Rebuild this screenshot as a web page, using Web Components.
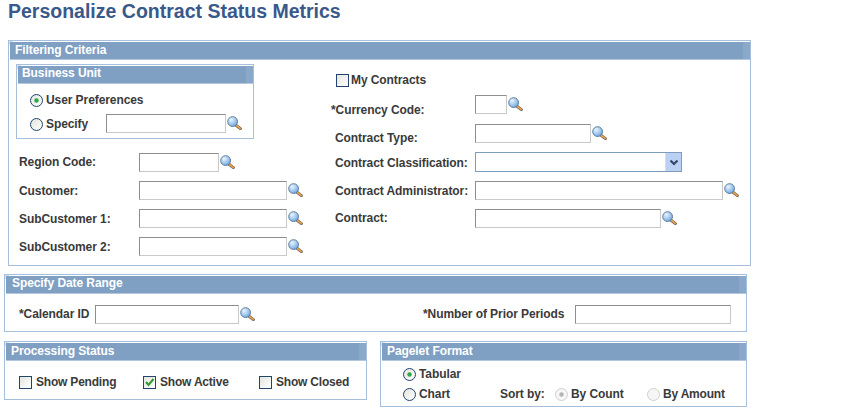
<!DOCTYPE html>
<html>
<head>
<meta charset="utf-8">
<title>Personalize Contract Status Metrics</title>
<style>
html, body { margin: 0; background: #fff; }
body { width: 844px; height: 412px; overflow: hidden; font: bold 12px "Liberation Sans", Arial, sans-serif; color: #3a3a3a; letter-spacing: -0.08px; }
.page { display: flex; flex-direction: column; padding: 0 0 0 4px; }
.filter-body { display: flex; padding: 4px 0 0 7px; height: 205px; box-sizing: border-box; }
.left { width: 315px; display: flex; flex-direction: column; }
.right { display: flex; flex-direction: column; }
.bu-rows { display: flex; flex-direction: column; padding: 4px 0 0 13px; height: 55px; box-sizing: border-box; }
.date-body { display: flex; align-items: center; justify-content: space-between; height: 40px; padding: 0 14px 0 14px; }
.date-body > div { display: flex; align-items: center; }
.bottom { display: flex; gap: 13px; margin-top: 9px; }
.status-body { display: flex; padding: 12px 0 0 14px; height: 39px; box-sizing: border-box; letter-spacing: -0.2px; }
.format-body { display: flex; flex-direction: column; padding: 3px 0 0 22px; height: 46px; box-sizing: border-box; }
.format-row { display: flex; align-items: center; height: 20px; }
</style>
</head>
<body>
<template id="lookup-icon">
  <svg width="15" height="14" viewBox="0 0 15 14" style="display:block">
    <defs>
      <radialGradient id="lens" cx="0.35" cy="0.3" r="0.8">
        <stop offset="0" stop-color="#eaf4fd"/><stop offset="0.6" stop-color="#9cc4ec"/><stop offset="1" stop-color="#5f97d6"/>
      </radialGradient>
    </defs>
    <path d="M9 9.2 L13.4 12.6" stroke="#7b6a58" stroke-width="3" stroke-linecap="round"/>
    <path d="M9.6 9.6 L13.2 12.4" stroke="#eda24e" stroke-width="1.5" stroke-linecap="round"/>
    <circle cx="5.6" cy="5.6" r="4.9" fill="url(#lens)" stroke="#5d7f9f" stroke-width="1"/>
  </svg>
</template>

<script>
class PsPanel extends HTMLElement {
    constructor(){
        super();
        this.attachShadow({mode:'open'});
        this.shadowRoot.innerHTML = `
            <style>
                :host{ display: block; box-sizing: border-box; border: 1px solid #a6bfdc; background: #fff; }
                .head{
                    position: relative;
                    height: 18px; box-sizing: border-box;
                    padding-left: var(--head-pad, 5px);
                    margin: 1px 0 0 1px;
                    background: #7f9fc3;
                    border-bottom: 1px solid #b3c7de;
                    color: #fff; font: bold 12px/var(--head-lh, 14px) "Liberation Sans", Arial, sans-serif;
                }
                .head::before{ content: ""; position: absolute; left: -1px; top: -1px; width: 3px; height: 3px; border-left: 1px solid #d7e1ed; border-top: 1px solid #d7e1ed; }
                .head::after{ content: ""; position: absolute; right: 0; top: 0; width: 7px; height: 100%; background: #8aa8ca; }
            </style>
            <div class="head"><slot name="title"></slot></div>
            <slot></slot>
        `;
    }
}
customElements.define('ps-panel', PsPanel);

class PsLookup extends HTMLElement {
    constructor(){
        super();
        this.attachShadow({mode:'open'});
    }
    connectedCallback(){
        let w = this.getAttribute('width') || 148;
        let icon = this.hasAttribute('noicon') ? '' : document.getElementById('lookup-icon').innerHTML;
        this.shadowRoot.innerHTML = `
            <style>
                :host{ display: inline-flex; align-items: flex-start; }
                .box{
                    box-sizing: border-box; width: ${w}px; height: 19px;
                    border: 1px solid #c9c9c9; border-top-color: #8e8e8e; border-left-color: #8e8e8e;
                    background: #fff;
                }
                .ico{ margin: 2px 0 0 1px; }
            </style>
            <div class="box"></div>
            <div class="ico">${icon}</div>
        `;
    }
}
customElements.define('ps-lookup', PsLookup);

class PsSelect extends HTMLElement {
    constructor(){
        super();
        this.attachShadow({mode:'open'});
        this.shadowRoot.innerHTML = `
            <style>
                :host{ display: block; box-sizing: border-box; width: 207px; height: 20px; border: 1px solid #7e9cbd; background: #fff; position: relative; }
                .btn{ position: absolute; right: 0; top: 0; bottom: 0; width: 16px; background: #bcd0f3; border-left: 1px solid #d2def5; box-sizing: border-box; display: flex; align-items: center; justify-content: center; }
            </style>
            <div class="btn"><svg width="10" height="7" viewBox="0 0 10 7"><path d="M1.5 1.5 L5 5 L8.5 1.5" fill="none" stroke="#34496b" stroke-width="2.2"/></svg></div>
        `;
    }
}
customElements.define('ps-select', PsSelect);

class PsCheck extends HTMLElement {
    constructor(){
        super();
        this.attachShadow({mode:'open'});
    }
    connectedCallback(){
        let mark = this.hasAttribute('checked') ? '<svg width="11" height="11" viewBox="0 0 11 11" style="display:block"><path d="M2 5 L4.5 8 L9.5 2" fill="none" stroke="#2f9a2f" stroke-width="2"/></svg>' : '';
        let gap = this.getAttribute('gap') || 4;
        this.shadowRoot.innerHTML = `
            <style>
                :host{ display: inline-flex; align-items: center; }
                .box{ box-sizing: border-box; width: 13px; height: 13px; border: 1px solid #23446f; background: linear-gradient(135deg, #e4e4e0, #fff); margin-right: ${gap}px; }
            </style>
            <div class="box">${mark}</div><slot></slot>
        `;
    }
}
customElements.define('ps-check', PsCheck);

class PsRadio extends HTMLElement {
    constructor(){
        super();
        this.attachShadow({mode:'open'});
    }
    connectedCallback(){
        let off = this.hasAttribute('disabled');
        let on = this.hasAttribute('checked');
        let dot = on ? `<circle cx="6.5" cy="6.5" r="2.2" fill="${off ? '#b4b4b4' : '#2ea84a'}"/>` : '';
        this.shadowRoot.innerHTML = `
            <style>
                :host{ display: inline-flex; align-items: center; }
                svg{ display: block; margin-right: 3px; }
            </style>
            <svg width="13" height="13" viewBox="0 0 13 13">
                <defs><linearGradient id="r" x1="0" y1="0" x2="1" y2="1"><stop offset="0" stop-color="#e2e2dc"/><stop offset="1" stop-color="#fff"/></linearGradient></defs>
                <circle cx="6.5" cy="6.5" r="6" fill="${off ? '#f6f6f6' : 'url(#r)'}" stroke="${off ? '#cfcfcf' : '#23446f'}"/>
                ${dot}
            </svg><slot></slot>
        `;
    }
}
customElements.define('ps-radio', PsRadio);

// label + control on a fixed row height, drop = how far the label sits below the input's centre
class PsField extends HTMLElement {
    constructor(){
        super();
        this.attachShadow({mode:'open'});
    }
    connectedCallback(){
        let lw = this.getAttribute('label-width') || 120;
        let h = this.getAttribute('height') || 28;
        let drop = this.getAttribute('drop') || 0;
        this.shadowRoot.innerHTML = `
            <style>
                :host{ display: block; }
                .row{ display: flex; height: ${h}px; box-sizing: border-box; }
                .lab{ width: ${lw}px; height: 19px; line-height: 19px; white-space: nowrap; padding-top: ${drop}px; box-sizing: content-box; }
                :host([req]) .lab{ margin-left: -4px; padding-right: 4px; }
            </style>
            <div class="row"><div class="lab"><slot name="label"></slot></div><slot></slot></div>
        `;
    }
}
customElements.define('ps-field', PsField);
</script>

<div style="height:40px;box-sizing:border-box;padding:0 0 0 8px;color:#39598a;letter-spacing:0;font:bold 19.5px/22px 'Liberation Sans',Arial,sans-serif">Personalize Contract Status Metrics</div>

<div class="page">
  <ps-panel style="width:743px;height:226px;margin-left:4px;--head-lh:16px">
    <span slot="title">Filtering Criteria</span>
    <div class="filter-body">
      <div class="left">
        <ps-panel style="width:238px;height:75px;flex:none;--head-lh:14px;--head-pad:4px">
          <span slot="title">Business Unit</span>
          <div class="bu-rows">
            <ps-radio checked style="height:24px">User Preferences</ps-radio>
            <div style="display:flex;height:24px">
              <ps-radio style="width:76px;height:24px">Specify</ps-radio>
              <ps-lookup width="120" style="margin-top:2px"></ps-lookup>
            </div>
          </div>
        </ps-panel>
        <div style="height:14px;flex:none"></div>
        <div style="padding-left:3px">
          <ps-field height="28"><span slot="label">Region Code:</span><ps-lookup width="80"></ps-lookup></ps-field>
          <ps-field height="28" drop="1"><span slot="label">Customer:</span><ps-lookup></ps-lookup></ps-field>
          <ps-field height="28" drop="1"><span slot="label">SubCustomer 1:</span><ps-lookup></ps-lookup></ps-field>
          <ps-field height="28" drop="1"><span slot="label">SubCustomer 2:</span><ps-lookup></ps-lookup></ps-field>
        </div>
      </div>
      <div class="right" style="padding-left:4px">
        <ps-check gap="2" style="height:24px;margin:4px 0 3px 1px">My Contracts</ps-check>
        <ps-field req label-width="140" height="29" drop="6"><span slot="label">*Currency Code:</span><ps-lookup width="32"></ps-lookup></ps-field>
        <ps-field label-width="140" height="28" drop="5"><span slot="label">Contract Type:</span><ps-lookup width="116"></ps-lookup></ps-field>
        <ps-field label-width="140" height="29" drop="2"><span slot="label">Contract Classification:</span><ps-select></ps-select></ps-field>
        <ps-field label-width="140" height="28" drop="1"><span slot="label">Contract Administrator:</span><ps-lookup width="248"></ps-lookup></ps-field>
        <ps-field label-width="140" height="28"><span slot="label">Contract:</span><ps-lookup width="186"></ps-lookup></ps-field>
      </div>
    </div>
  </ps-panel>

  <ps-panel style="width:743px;height:58px;margin-top:8px;--head-pad:6px">
    <span slot="title">Specify Date Range</span>
    <div class="date-body">
      <div><span style="width:76px">*Calendar ID</span><ps-lookup width="144"></ps-lookup></div>
      <div><span style="width:152px">*Number of Prior Periods</span><ps-lookup width="156" noicon></ps-lookup></div>
    </div>
  </ps-panel>

  <div class="bottom">
    <ps-panel style="width:363px;height:59px;--head-lh:16px">
      <span slot="title">Processing Status</span>
      <div class="status-body">
        <ps-check style="width:124px;height:18px">Show Pending</ps-check>
        <ps-check checked style="width:116px;height:18px">Show Active</ps-check>
        <ps-check style="height:18px">Show Closed</ps-check>
      </div>
    </ps-panel>
    <ps-panel style="width:367px;height:66px;--head-lh:16px">
      <span slot="title">Pagelet Format</span>
      <div class="format-body">
        <div class="format-row"><ps-radio checked>Tabular</ps-radio></div>
        <div class="format-row">
          <ps-radio style="width:97px">Chart</ps-radio>
          <span style="width:55px">Sort by:</span>
          <ps-radio checked disabled style="width:92px">By Count</ps-radio>
          <ps-radio disabled style="letter-spacing:-0.2px">By Amount</ps-radio>
        </div>
      </div>
    </ps-panel>
  </div>
</div>
</body>
</html>
